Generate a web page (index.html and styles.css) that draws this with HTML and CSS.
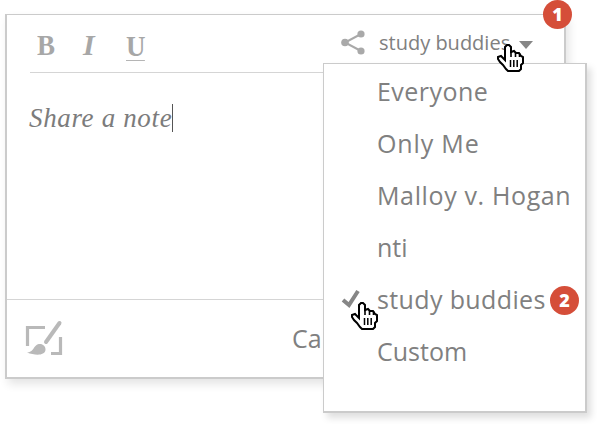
FILE: index.html
```html
<!DOCTYPE html>
<html lang="en">
<head>
<meta charset="utf-8">
<title>Share a note</title>
<link rel="stylesheet" href="styles.css">
</head>
<body>
<svg class="defs" aria-hidden="true">
  <symbol id="hand" viewBox="0 0 29 30">
    <path d="M9 17V4L11 2H13L15 4V9L18 8L20 10L23 10L25 13L27 14V20L25 22V26L23 28H12L10 26L7 22L4 19L2 16V14L5 13L7 15L9 17Z" fill="#fff" stroke="#000" stroke-width="2" stroke-linejoin="miter"/>
    <path d="M15 8V14M19.5 9V14M23.5 10V14" stroke="#000" stroke-width="1.6"/>
    <path d="M14.5 17V24M17.8 17V24M21.2 17V24" stroke="#000" stroke-width="1.5"/>
  </symbol>
</svg>
<main class="composer">
  <header class="toolbar">
    <b class="tool bold">B</b>
    <i class="tool italic">I</i>
    <b class="tool underline">U</b>
    <div class="share">
      <svg class="share-icon" viewBox="0 0 24 26"><path d="M20 4L4 12.5L20 21" fill="none" stroke="#a9a9a9" stroke-width="2"/><g fill="#a9a9a9"><circle cx="4" cy="12.5" r="3.8"/><circle cx="20" cy="4" r="3.6"/><circle cx="20" cy="21" r="3.6"/></g></svg>
      <span class="audience">study buddies</span>
      <span class="caret"></span>
    </div>
  </header>
  <div class="editor"><span class="note">Share a note</span><span class="cursor"></span></div>
  <footer class="actions">
    <svg class="draw-icon" viewBox="0 0 40 38"><path d="M21 7.5H3.5V26M36.5 17V33.5H27" fill="none" stroke="#b9b9b9" stroke-width="3.2"/><path d="M35.5 3L22 22" stroke="#b9b9b9" stroke-width="4" stroke-linecap="round"/><path d="M17 22L24 28" stroke="#fff" stroke-width="1.5"/><path d="M3 32.5C9 32 9 28 12 25.5C16 22 22 25 21.5 30C20.5 36 11 35.5 3 32.5Z" fill="#b9b9b9"/></svg>
    <span class="cancel">Cancel</span>
  </footer>
  <span class="badge badge-one">1</span>
</main>
<ul class="menu">
  <li><span class="everyone">Everyone</span></li>
  <li><span class="only">Only Me</span></li>
  <li><span class="malloy">Malloy v. Hogan</span></li>
  <li><span>nti</span></li>
  <li class="selected"><svg class="check" viewBox="0 0 20 20"><path d="M2 11L8 16L17 2" fill="none" stroke="#868686" stroke-width="4"/></svg><span class="buddies">study buddies</span><span class="badge badge-two">2</span></li>
  <li><span>Custom</span></li>
</ul>
<svg class="pointer pointer-one"><use href="#hand"/></svg>
<svg class="pointer pointer-two"><use href="#hand"/></svg>
</body>
</html>
```
FILE: styles.css
```css
* { box-sizing: border-box; }
body { margin: 0; width: 597px; height: 424px; position: relative; overflow: hidden; background: #fff; color: #808080; font-family: "Open Sans", sans-serif; }
.defs { position: absolute; width: 0; height: 0; }
.composer { position: relative; width: 561px; height: 365px; margin: 0 0 0 5px; top: 14px; border: 2px solid #cbcbcb; border-top-width: 1.5px; background: #fff; box-shadow: 3px 5px 9px rgba(0,0,0,.11); display: flex; flex-direction: column; }
.toolbar { height: 58px; margin: 0 22px 0 23px; padding-bottom: 2px; border-bottom: 1px solid #d5d5d5; display: flex; align-items: center; }
.tool { font: bold 30px/32px "Liberation Serif", serif; color: #a7a7a7; width: 46px; }
.bold, .italic { padding-top: 4px; }
.bold { padding-left: 7px; transform: scaleX(.9); transform-origin: 7px 0; }
.italic { padding-left: 7px; font-style: italic; }
.underline { margin: 5px 0 0 4px; width: 21px; height: 31px; line-height: 31px; border-bottom: 1px solid #b5b5b5; transform: scaleX(.9); transform-origin: 0 0; }
.share { margin-left: auto; display: flex; align-items: center; margin-right: 9px; }
.share-icon { width: 24px; height: 26px; margin-right: 14px; }
.audience { font-size: 20px; line-height: 28px; width: 140px; }
.caret { border: 7px solid transparent; border-top: 8px solid #868686; border-bottom: 0; margin-top: 5px; }
.editor { flex: 1; padding: 29px 22px; display: flex; align-items: flex-start; }
.note { font: italic 27px/32px "Liberation Serif", serif; color: #7c7c7c; letter-spacing: .65px; }
.cursor { width: 1px; height: 28px; margin-top: 2px; background: #555; }
.actions { height: 78px; border-top: 1px solid #d5d5d5; display: flex; align-items: center; padding-left: 17px; }
.draw-icon { width: 40px; height: 38px; }
.cancel { font-size: 25px; margin: -2px 0 0 228px; }
.menu { position: absolute; left: 323px; top: 63px; width: 264px; height: 350px; margin: 0; padding: 1px 0 0 53px; list-style: none; background: #fff; border: 1px solid #cbcbcb; border-right-width: 2px; border-bottom-width: 2px; box-shadow: 4px 5px 7px rgba(0,0,0,.13); font-size: 25px; }
.menu li { height: 52px; line-height: 52px; white-space: nowrap; display: flex; align-items: center; position: relative; }
.everyone { letter-spacing: .45px; }
.only { letter-spacing: .85px; }
.malloy { letter-spacing: .63px; }
.buddies { letter-spacing: .37px; }
.check { position: absolute; left: -36px; top: 16px; width: 20px; height: 20px; }
.badge { position: absolute; width: 29px; height: 29px; border-radius: 50%; background: #d54e39; color: #fff; font: 800 18px/29px "Open Sans", sans-serif; text-align: center; letter-spacing: 0; }
.badge-one { right: -8px; top: -15px; }
.badge-two { left: 173px; top: 13px; }
.pointer { position: absolute; width: 29px; height: 30px; }
.pointer-one { left: 496px; top: 43px; }
.pointer-two { left: 350px; top: 301px; }
```
